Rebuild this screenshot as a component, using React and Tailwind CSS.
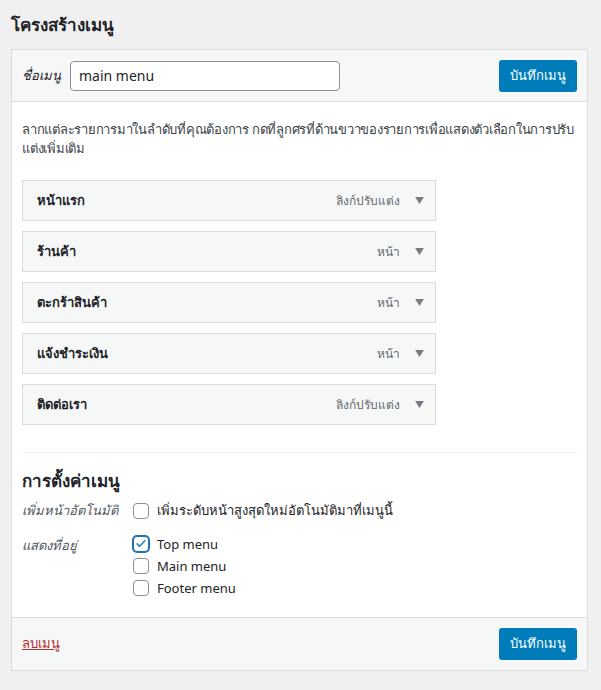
const items = [
  { title: 'หน้าแรก', type: 'ลิงก์ปรับแต่ง' },
  { title: 'ร้านค้า', type: 'หน้า' },
  { title: 'ตะกร้าสินค้า', type: 'หน้า' },
  { title: 'แจ้งชำระเงิน', type: 'หน้า' },
  { title: 'ติดต่อเรา', type: 'ลิงก์ปรับแต่ง' },
];

const locations = [
  { label: 'Top menu', checked: true },
  { label: 'Main menu', checked: false },
  { label: 'Footer menu', checked: false },
];

function Checkbox({ checked }) {
  return (
    <span
      className={
        'w-4 h-4 shrink-0 rounded-[4px] border bg-white flex items-center justify-center ' +
        (checked ? 'border-[#2271b1] ring-1 ring-[#2271b1]' : 'border-[#8c8f94]')
      }
    >
      {checked && (
        <svg viewBox="0 0 20 20" className="w-[15px] h-[15px]">
          <path d="M4.5 10.5l3.5 3.5 7.5-8" fill="none" stroke="#3582c4" strokeWidth="2.4" strokeLinecap="round" strokeLinejoin="round" />
        </svg>
      )}
    </span>
  );
}

function SaveButton() {
  return (
    <button className="h-8 px-[11px] bg-[#007cba] text-white text-[13px] rounded-[3px] leading-none">
      บันทึกเมนู
    </button>
  );
}

export default function App() {
  return (
    <div
      className="min-h-screen bg-[#f0f0f1] text-[#1d2327] pt-[14px] pl-[11px] pr-[13px]"
      style={{ fontFamily: '"Noto Sans", "Liberation Sans", sans-serif' }}
    >
      <h2 className="text-[17px] font-semibold leading-[22px] mb-[13px]">โครงสร้างเมนู</h2>

      <div className="border border-[#dcdcde] bg-white">
        <div className="bg-[#f6f7f7] border-b border-[#dcdcde] h-[52px] flex items-center px-[10px]">
          <span className="italic text-[13px] w-[48px]">ชื่อเมนู</span>
          <div className="w-[270px] h-[30px] border border-[#8c8f94] rounded-[4px] bg-white flex items-center px-2 text-[14px]">
            main menu
          </div>
          <div className="ml-auto">
            <SaveButton />
          </div>
        </div>

        <div className="px-[10px] pt-[18px] pb-[21px]">
          <p className="text-[13px] leading-[19px] text-[#3c434a] tracking-[-0.25px]">
            ลากแต่ละรายการมาในลำดับที่คุณต้องการ กดที่ลูกศรที่ด้านขวาของรายการเพื่อแสดงตัวเลือกในการปรับแต่งเพิ่มเติม
          </p>

          <div className="mt-[22px] flex flex-col gap-[10px] w-[414px]">
            {items.map((it) => (
              <div key={it.title} className="h-[41px] border border-[#dcdcde] bg-[#f6f7f7] flex items-center pl-[14px] pr-[11px]">
                <span className="text-[13px] font-semibold">{it.title}</span>
                <span className="ml-auto text-[12px] text-[#646970]">{it.type}</span>
                <svg viewBox="0 0 10 8" className="w-[9px] h-[7px] ml-[15px]">
                  <path d="M0 0h10L5 8z" fill="#787c82" />
                </svg>
              </div>
            ))}
          </div>

          <div className="border-t border-[#f0f0f1] mt-[27px] pt-[17px]">
            <h3 className="text-[17px] font-semibold leading-[22px]">การตั้งค่าเมนู</h3>
            <div className="mt-[9px] flex">
              <span className="w-[111px] italic text-[13px] text-[#50575e]">เพิ่มหน้าอัตโนมัติ</span>
              <label className="flex items-center gap-2 text-[13px]">
                <Checkbox checked={false} />
                เพิ่มระดับหน้าสูงสุดใหม่อัตโนมัติมาที่เมนูนี้
              </label>
            </div>
            <div className="mt-[15px] flex">
              <span className="w-[111px] italic text-[13px] text-[#50575e]">แสดงที่อยู่</span>
              <div className="flex flex-col gap-[6px]">
                {locations.map((l) => (
                  <label key={l.label} className="flex items-center gap-2 text-[13px] leading-4">
                    <Checkbox checked={l.checked} />
                    {l.label}
                  </label>
                ))}
              </div>
            </div>
          </div>
        </div>

        <div className="bg-[#f6f7f7] border-t border-[#dcdcde] h-[53px] flex items-center px-[10px]">
          <a className="text-[13px] text-[#b32d2e] underline">ลบเมนู</a>
          <div className="ml-auto">
            <SaveButton />
          </div>
        </div>
      </div>
    </div>
  );
}
